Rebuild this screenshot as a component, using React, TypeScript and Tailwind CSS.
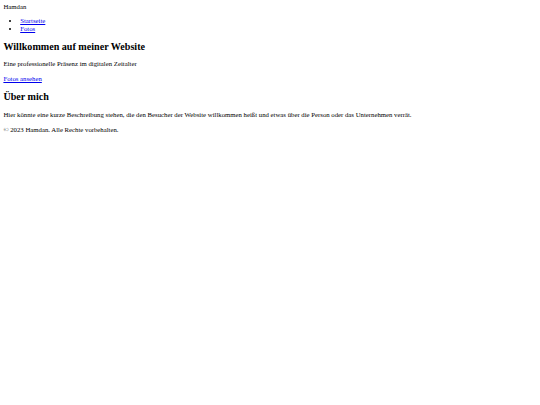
export default function App() {
  return (
    <div className="min-h-[405px] bg-white px-[3.4px] pt-[3px] text-black text-[6.75px] leading-[7.8px] [font-family:'Liberation_Serif','Times_New_Roman',serif]">
      <header>
        <div>Hamdan</div>
        <nav>
          <ul className="mt-[6.4px] list-disc pl-[16.8px]">
            <li>
              <a href="#" className="text-[#0000ee] underline">Startseite</a>
            </li>
            <li>
              <a href="#" className="text-[#0000ee] underline">Fotos</a>
            </li>
          </ul>
        </nav>
      </header>
      <main>
        <h2 className="mt-[8.7px] text-[10.1px] leading-[11.6px] font-bold">Willkommen auf meiner Website</h2>
        <p className="mt-[7.3px]">Eine professionelle Präsenz im digitalen Zeitalter</p>
        <p className="mt-[7.2px]">
          <a href="#" className="text-[#0000ee] underline">Fotos ansehen</a>
        </p>
        <h2 className="mt-[8.3px] text-[10.1px] leading-[11.6px] font-bold">Über mich</h2>
        <p className="mt-[7.6px]">
          Hier könnte eine kurze Beschreibung stehen, die den Besucher der Website willkommen heißt und etwas über die Person oder das Unternehmen verrät.
        </p>
      </main>
      <footer>
        <p className="mt-[7.5px]">© 2023 Hamdan. Alle Rechte vorbehalten.</p>
      </footer>
    </div>
  );
}
